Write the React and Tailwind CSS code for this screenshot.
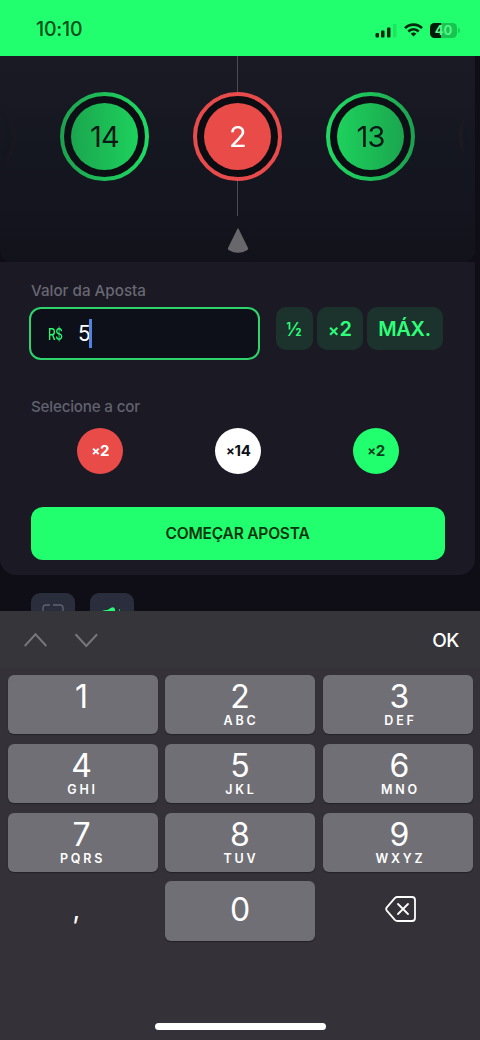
import { useState } from 'react'

const tiles = [
  { id: 'prev', n: '', ring: 'border-[#e84b4b]', fill: 'bg-[#e84b4b]', text: 'text-white' },
  { id: 'a', n: 14, ring: 'border-[#20e566]', fill: 'bg-[#1ee162]', text: 'text-[#081a14]' },
  { id: 'b', n: 2, ring: 'border-[#e84b4b]', fill: 'bg-[#e84b48]', text: 'text-white' },
  { id: 'c', n: 13, ring: 'border-[#20e566]', fill: 'bg-[#1ee162]', text: 'text-[#081a14]' },
  { id: 'next', n: '', ring: 'border-[#e84b4b]', fill: 'bg-[#e84b4b]', text: 'text-white' }
]

const colors = [
  { id: 'red', label: '2', cls: 'bg-[#e84b48] text-white' },
  { id: 'white', label: '14', cls: 'bg-white text-[#101018]' },
  { id: 'green', label: '2', cls: 'bg-[#21ff6e] text-[#06401c]' }
]

const keys = [
  ['1', '', ''], ['2', 'ABC', 'pl-[2px]'], ['3', 'DEF', 'pl-[6px]'],
  ['4', 'GHI', ''], ['5', 'JKL', 'pl-[2px]'], ['6', 'MNO', 'pl-[6px]'],
  ['7', 'PQRS', ''], ['8', 'TUV', 'pl-[2px]'], ['9', 'WXYZ', 'pl-[6px]']
]

function StatusBar() {
  return (
    <div className="h-14 shrink-0 bg-[#21ff6e] flex items-center justify-between pl-9 pr-[20px] pt-[4px]">
      <span className="text-[19.5px] font-medium tracking-[-0.2px] text-[#064d1c]">10:10</span>
      <div className="flex items-center gap-[7px]">
        <svg width="22" height="15" viewBox="0 0 22 15">
          <rect x="0.5" y="10" width="3.5" height="4.5" rx="1" fill="#06290f" />
          <rect x="6" y="7.5" width="3.5" height="7" rx="1" fill="#06290f" />
          <rect x="12" y="4.5" width="3.5" height="10" rx="1" fill="#06290f" />
          <rect x="18" y="1" width="3.5" height="13.5" rx="1" fill="#1ce65d" />
        </svg>
        <svg width="19" height="14" viewBox="0 0 19 14" fill="none" stroke="#06290f" strokeWidth="2.6">
          <path d="M1 5.2C5.7.4 13.3.4 18 5.2" />
          <path d="M4.3 8.5c3-3 7.4-3 10.4 0" />
          <path d="M9.5 13.6 6.7 10.7c1.6-1.5 4-1.5 5.6 0z" fill="#06290f" stroke="none" />
        </svg>
        <div className="flex items-center">
          <div className="w-[27px] h-[15px] rounded-[4.5px] bg-[linear-gradient(90deg,#031c0a_40%,#16c54f_40%)] flex items-center justify-center text-[13px] font-bold leading-none text-[#55f58b]">
            40
          </div>
          <div className="w-[2px] h-[5px] ml-px rounded-r bg-[#17cf52]" />
        </div>
      </div>
    </div>
  )
}

function Roulette() {
  return (
    <div className="relative h-[206px] shrink-0 w-[475px] overflow-hidden rounded-b-xl bg-[linear-gradient(180deg,#1a1a24_0%,#151720_45%,#12121b_100%)]">
      <div className="absolute left-[237px] top-0 w-px h-40 bg-[#4b4b55]" />
      <div className="relative flex justify-center gap-[44px] pt-[35.5px] [mask-image:linear-gradient(90deg,transparent_0%,rgba(0,0,0,0.02)_4%,rgba(0,0,0,0.68)_13%,rgba(0,0,0,0.92)_29%,#000_38%,#000_62%,rgba(0,0,0,0.92)_71%,rgba(0,0,0,0.68)_87%,rgba(0,0,0,0.07)_96%,transparent_98%)]">
        {tiles.map(t => (
          <div key={t.id} className={`size-[89px] shrink-0 rounded-full border-4 bg-[#0c0d13] flex items-center justify-center ${t.ring}`}>
            <div className={`size-[67px] rounded-full flex items-center justify-center text-[29px] tracking-[-0.8px] pt-px ${t.fill} ${t.text}`}>
              {t.n}
            </div>
          </div>
        ))}
      </div>
      <svg className="absolute left-[227px] top-[171px]" width="22" height="27" viewBox="0 0 22 27">
        <path d="M10.2 2.2Q11 .4 11.8 2.2L21 21Q21.5 22.3 20 23.2Q11 28.5 2 23.2Q.5 22.3 1 21Z" fill="#68686c" />
      </svg>
    </div>
  )
}

function BetForm() {
  const [bet] = useState('5')
  return (
    <div className="h-[313px] shrink-0 w-[475px] rounded-b-2xl bg-[#1a1924] px-[30px] pt-[18px]">
      <p className="h-5 leading-[21px] pl-px text-[15.2px] font-medium text-[#696873]">Valor da Aposta</p>
      <div className="flex mt-[7px] gap-4">
        <div className="w-[231px] h-[53px] -ml-px rounded-xl border-2 border-[#2ed36b] bg-[#0d1018] flex items-center pl-[17px]">
          <span className="w-[15px] text-[16px] font-medium text-[#2cf572]">
            <span className="inline-block origin-left scale-x-[0.74] tracking-[-0.5px]">R$</span>
          </span>
          <span className="ml-[15px] text-[21px] text-white pt-px">{bet}</span>
          <span className="w-[3px] h-[29px] -ml-[2px] bg-[#5083e0]" />
        </div>
        <div className="flex gap-1 text-[#2eff79] font-semibold text-[20px]">
          <button className="w-[37px] h-[43px] rounded-[10px] bg-[#1b332c] text-[18px] pr-px pt-px font-medium">½</button>
          <button className="w-[46px] h-[43px] rounded-[10px] bg-[#1b332c] pt-px">
            <span className="text-[17px]">×</span>2
          </button>
          <button className="w-[76px] h-[43px] rounded-[10px] bg-[#1b332c] pt-px pr-px tracking-[-0.3px]">MÁX.</button>
        </div>
      </div>

      <p className="h-5 leading-[21px] mt-9 pl-px text-[15.2px] tracking-[-0.2px] font-medium text-[#62626e]">Selecione a cor</p>
      <div className="grid grid-cols-3 justify-items-center mt-3 pl-[1.5px]">
        {colors.map(c => (
          <button key={c.id} className={`size-[46px] rounded-full text-[15px] font-bold tracking-[-0.3px] ${c.cls}`}>
            <span className="text-[13px]">×</span>{c.label}
          </button>
        ))}
      </div>

      <button className="block w-[414px] h-[53px] mx-auto mt-[33px] rounded-xl bg-[#21ff6e] text-[15.5px] font-semibold tracking-[-0.2px] pt-px text-[#06350f]">
        COMEÇAR APOSTA
      </button>
    </div>
  )
}

function Tools() {
  return (
    <div className="h-9 shrink-0 overflow-hidden flex gap-[15px] pl-[30.5px] pt-[18px]">
      <div className="w-11 h-11 rounded-[9px] bg-[#2a2d3b] flex justify-center pt-[11px]">
        <svg width="24" height="22" viewBox="0 0 24 22" fill="none" stroke="#606472" strokeWidth="1.3">
          <path d="M2 8V4Q2 1 5 1H9M12 1H19Q22 1 22 4V8" />
        </svg>
      </div>
      <div className="w-11 h-11 rounded-[9px] bg-[#2a2d3b] flex justify-center pt-[14px]">
        <svg width="22" height="20" viewBox="0 0 22 20" fill="#29fa73">
          <path d="M1 4Q3 3.2 7 2.8L10 .8Q14-.8 14 3V18L7 12H2z" />
          <path d="M18 2h1v8h-1z" opacity=".6" />
        </svg>
      </div>
    </div>
  )
}

function Keyboard() {
  const key = 'h-[59.3px] rounded-md bg-[#716f76] shadow-[0_1px_1px_#242229] flex flex-col items-center text-white'
  return (
    <div className="flex-1 bg-[#343138] flex flex-col">
      <div className="h-[57px] bg-[#363539] flex items-center justify-between pl-6 pr-[21px]">
        <svg width="76" height="16" viewBox="0 0 76 16" fill="none" stroke="#77767b" strokeWidth="2">
          <path d="M.7 14 11.5 2.3 22.3 14M51.5 2.3 62.3 14 73.1 2.3" />
        </svg>
        <span className="text-[19px] font-medium text-white tracking-[-0.4px] pt-[3px]">OK</span>
      </div>
      <div className="grid grid-cols-3 gap-x-[7.5px] gap-y-[9.5px] px-[7.5px] pt-[7px]">
        {keys.map(([n, letters, shift]) => (
          <button key={n} className={`${key} ${shift}`}>
            <span className="text-[32px] leading-[34px] font-[380] mt-[5px] mr-[2px]">{n}</span>
            {letters && (
              <span className="text-[12.5px] leading-[13px] font-semibold tracking-[2.8px]">{letters}</span>
            )}
          </button>
        ))}
        <div className="h-[59px] flex items-center justify-center text-white text-[27px] pr-3 pb-0.5">,</div>
        <button className={key}>
          <span className="text-[32px] leading-[38px] font-[380] mt-[10px]">0</span>
        </button>
        <div className="h-[59px] flex items-center justify-center pb-[3px] pl-1.5">
          <svg width="32" height="28" viewBox="0 0 32 28" fill="none" stroke="#fff" strokeWidth="1.8" strokeLinejoin="round" strokeLinecap="round">
            <path d="M12.5 2H27Q30 2 30 5V23Q30 26 27 26H12.5Q11 26 9.8 24.8L1.8 15.6Q.6 14 1.8 12.4L9.8 3.2Q11 2 12.5 2Z" />
            <path d="m13 9 10 10M23 9 13 19" />
          </svg>
        </div>
      </div>
      <div className="mt-auto mb-[10px] ml-[155px] w-[171px] h-[7px] rounded-full bg-white" />
    </div>
  )
}

export default function App() {
  return (
    <div className="w-[480px] h-[1040px] overflow-hidden flex flex-col bg-[#0f0e16] font-['Inter',sans-serif]">
      <StatusBar />
      <Roulette />
      <BetForm />
      <Tools />
      <Keyboard />
    </div>
  )
}
